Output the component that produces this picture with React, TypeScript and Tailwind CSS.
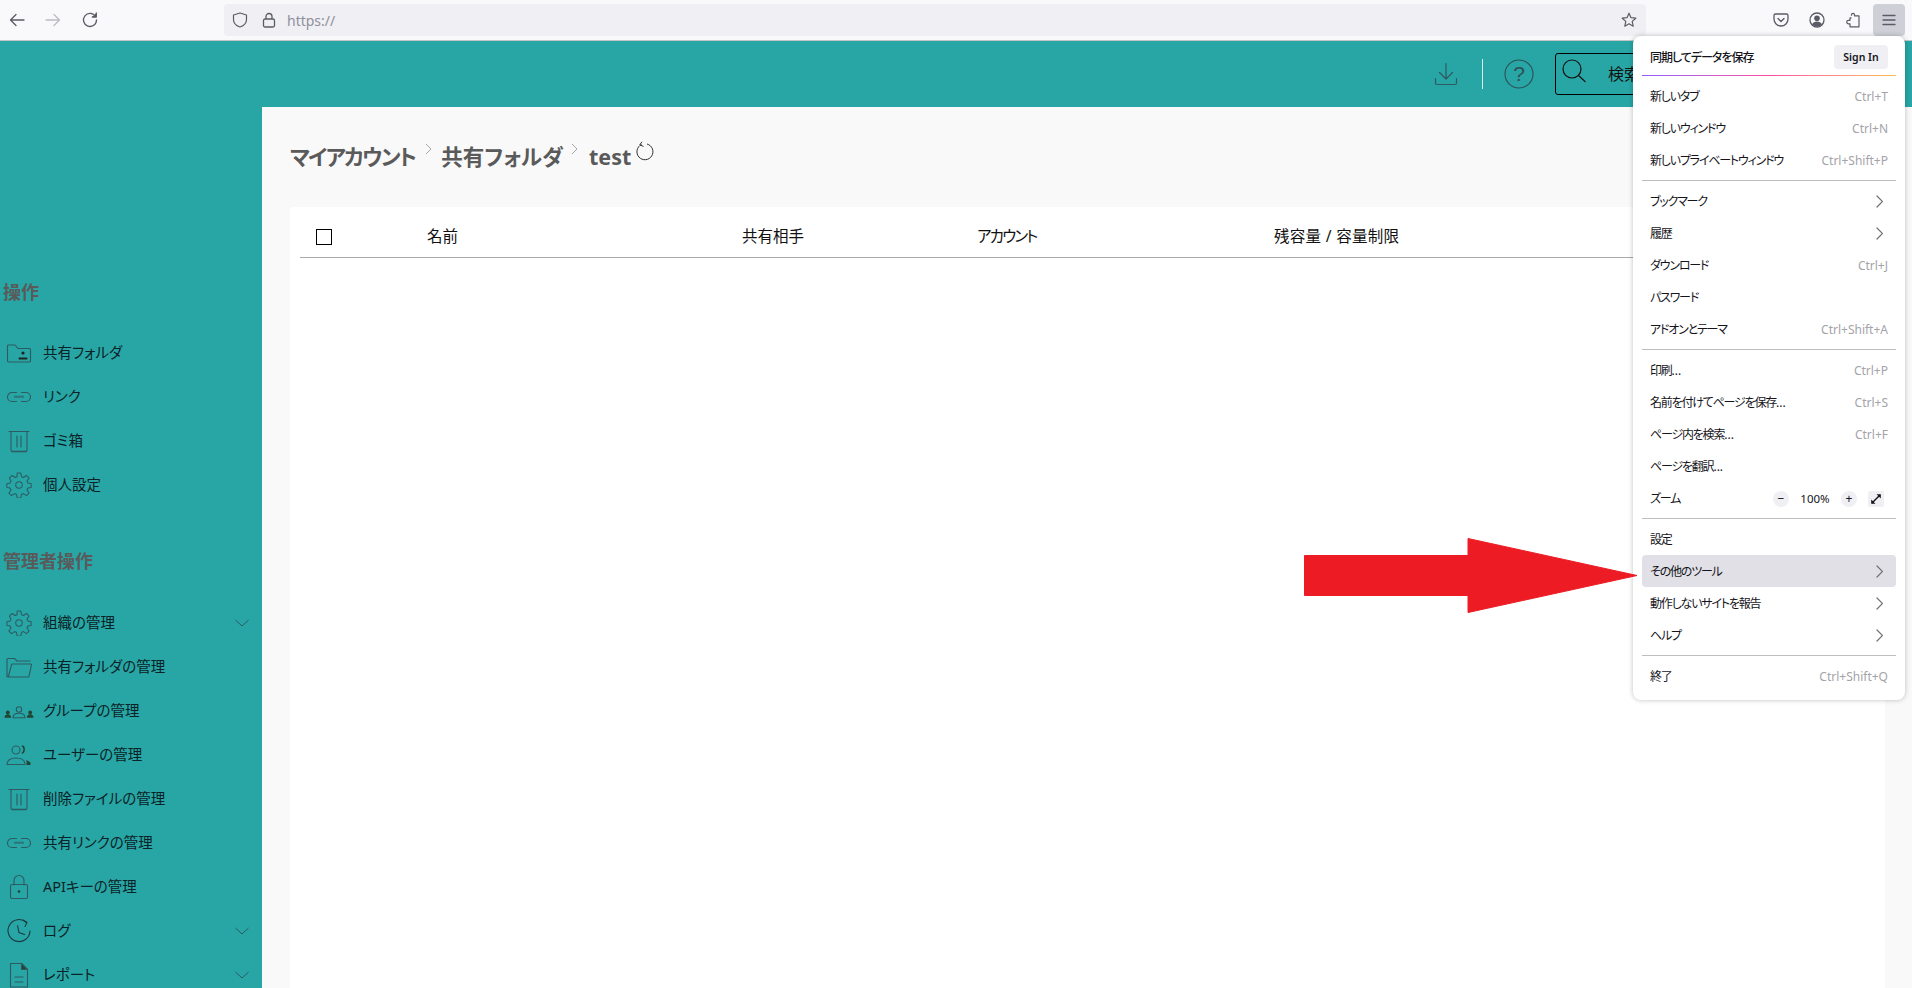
import React from "react";

const sw = { fill: "none", stroke: "currentColor", strokeWidth: 1.1, strokeLinecap: "round", strokeLinejoin: "round" } as const;

const IconFolderUser = () => (
  <svg width="26" height="24" viewBox="0 0 26 24" {...sw}>
    <path d="M1.5 4.5V20a1.5 1.5 0 0 0 1.5 1h20a1.5 1.5 0 0 0 1.5-1V8.5a1 1 0 0 0-1-1H12L9 4H2.5a1 1 0 0 0-1 .5z" />
    <circle cx="17" cy="12" r="1.6" fill="#222" stroke="none" />
    <path d="M13.5 17.5h7" stroke="#222" strokeWidth="2" />
  </svg>
);
const IconLink = () => (
  <svg width="26" height="24" viewBox="0 0 26 24" {...sw}>
    <path d="M10.5 7.5H6a4.5 4.5 0 0 0 0 9h4.5" />
    <path d="M15.5 7.5H20a4.5 4.5 0 0 1 0 9h-4.5" />
    <path d="M8.5 12h9" />
    <path d="M8.5 11h9" opacity="0.4" />
  </svg>
);
const IconTrash = () => (
  <svg width="26" height="24" viewBox="0 0 26 24" {...sw}>
    <path d="M3 2.5h20" />
    <path d="M5 2.5V21a1.5 1.5 0 0 0 1.5 1.5h13A1.5 1.5 0 0 0 21 21V2.5" />
    <path d="M11 7v11M15 7v11" />
    <path d="M6 22.5h14" strokeWidth="1.6" />
  </svg>
);
const IconGear = () => (
  <svg width="26" height="26" viewBox="0 0 24 24" strokeWidth="0.95" fill="none" stroke="currentColor" strokeLinejoin="round">
    <circle cx="12" cy="12" r="3" />
    <path d="M10.3 1h3.4l.6 3.3 1.8.8 2.8-1.9 2.4 2.4-1.9 2.8.8 1.8 3 .6v3.4l-3 .6-.8 1.8 1.9 2.8-2.4 2.4-2.8-1.9-1.8.8-.6 3.3h-3.4l-.6-3.3-1.8-.8-2.8 1.9-2.4-2.4 1.9-2.8-.8-1.8-3-.6v-3.4l3-.6.8-1.8L3.2 5.6l2.4-2.4 2.8 1.9 1.8-.8z" />
  </svg>
);
const IconFolderOpen = () => (
  <svg width="28" height="24" viewBox="0 0 28 24" {...sw}>
    <path d="M2 21V4.5a1 1 0 0 1 1-1h6.5l2.5 2.5h13" />
    <path d="M2 21a1 1 0 0 0 1 1h20a1 1 0 0 0 1-.8L26.5 10a.8.8 0 0 0-.8-1H7.5a1 1 0 0 0-1 .8L3.5 21" />
  </svg>
);
const IconGroup = () => (
  <svg width="30" height="24" viewBox="0 0 30 24" fill="none" stroke="currentColor" strokeWidth="1.100">
    <circle cx="15" cy="10.500" r="2.700" />
    <path d="M9 18.800c0-3 2.500-4.500 6-4.500s6 1.500 6 4.500z" />
    <circle cx="3.800" cy="13.500" r="1.900" fill="#243" stroke="none" />
    <circle cx="26.200" cy="13.500" r="1.900" fill="#243" stroke="none" />
    <path d="M.500 18.800c0-2.300 1.300-3.500 3.300-3.500s3.300 1.200 3.300 3.500zM22.900 18.800c0-2.300 1.300-3.500 3.300-3.500s3.300 1.200 3.300 3.500z" fill="#243" stroke="none" />
  </svg>
);
const IconUsers = () => (
  <svg width="26" height="24" viewBox="0 0 26 24" {...sw}>
    <circle cx="10" cy="7" r="4" />
    <path d="M1 21.500c0-4.500 4-6.500 9-6.500s9 2 9 6.500z" />
    <path d="M16.500 3c2.200 1 2.200 6 0 7" stroke="#243" strokeWidth="1.600" />
    <path d="M20.500 17l4 2.500v2.500h-4z" fill="#243" stroke="none" />
  </svg>
);
const IconLock = () => (
  <svg width="26" height="26" viewBox="0 0 26 26" {...sw}>
    <path d="M8 11V6.500a5 5 0 0 1 10 0V11" />
    <rect x="4.500" y="10.500" width="17" height="14" rx="1.500" />
    <circle cx="13" cy="17.500" r="1.300" fill="#243" stroke="none" />
  </svg>
);
const IconClock = () => (
  <svg width="26" height="26" viewBox="0 0 26 26" fill="none" stroke="#1c3a40" strokeWidth="1.100" strokeLinecap="round">
    <path d="M20.500 4.500A11 11 0 1 0 24 13" />
    <path d="M11.500 7.500l1.500 7 5.500 2" />
    <path d="M17 2l4 2.500-2 4" />
  </svg>
);
const IconFile = () => (
  <svg width="26" height="26" viewBox="0 0 26 26" {...sw}>
    <path d="M4.500 1.500h11l6 6V25h-17z" />
    <path d="M15.500 1.500l6 6h-6z" fill="#243" />
    <path d="M9 15h8M9 20h8" />
  </svg>
);
const ChevDown = () => (
  <svg className="block" width="14" height="8" viewBox="0 0 14 8" fill="none" stroke="currentColor" strokeWidth="1">
    <path d="M.5 1l6.500 6 6.500-6" />
  </svg>
);
const ChevRight = () => (
  <svg width="7" height="13" viewBox="0 0 7 13" fill="none" stroke="#6f6f76" strokeWidth="1.200" strokeLinecap="round">
    <path d="M1 1l5.500 5.500L1 12" />
  </svg>
);
const Crumb = () => (
  <svg width="8" height="12" viewBox="0 0 8 12" fill="none" stroke="#a8a8a8" strokeWidth="1">
    <path d="M1 1l5 5-5 5" />
  </svg>
);

type NavItem = { icon: React.ReactNode; label: string; chevron?: boolean };
const NavRow = ({ icon, label, chevron }: NavItem) => (
  <div className="flex h-11 items-center text-[14.500px] text-[#0d2226]">
    <span className="flex w-[38px] shrink-0 items-center justify-center text-[#2e5a62]">{icon}</span>
    <span className="ml-[5px] flex-1 whitespace-nowrap">{label}</span>
    {chevron && (
      <span className="mr-[13px] text-[#2e5a62]">
        <ChevDown />
      </span>
    )}
  </div>
);

const Sep = () => <div className="mx-[9px] my-[4px] h-px bg-[#bdbdc2]" />;

const MenuRow = ({
  label,
  dots,
  shortcut,
  chevron,
  active,
}: {
  label: string;
  dots?: boolean;
  shortcut?: string;
  chevron?: boolean;
  active?: boolean;
}) => (
  <div className={`mx-[9px] flex h-8 items-center justify-between rounded-[4px] px-[8px] pt-px ${active ? "bg-[#e0e0e6]" : ""}`}>
    <span className="whitespace-nowrap text-[12px] tracking-[-1.200px] text-[#15141a]">
      {label}
      {dots && <span className="tracking-[0px]">...</span>}
    </span>
    {shortcut && <span className="whitespace-nowrap text-[12px] text-[#a3a3a8]">{shortcut}</span>}
    {chevron && (
      <span className="mr-[5px] flex">
        <ChevRight />
      </span>
    )}
  </div>
);

const Toolbar = () => (
  <div className="flex h-[41px] shrink-0 items-center border-b border-[#c4c4c6] bg-[#f9f9fb] text-[#5b5b66]">
    <div className="flex w-[224px] items-center pl-[9px]">
      <svg width="16" height="16" viewBox="0 0 16 16" fill="none" stroke="#5b5b66" strokeWidth="1.300" strokeLinecap="round" strokeLinejoin="round">
        <path d="M15 8H1.500M7 2.500L1.500 8 7 13.500" />
      </svg>
      <svg className="ml-[20px]" width="16" height="16" viewBox="0 0 16 16" fill="none" stroke="#bdbdc2" strokeWidth="1.300" strokeLinecap="round" strokeLinejoin="round">
        <path d="M1 8h13.500M9 2.500L14.500 8 9 13.500" />
      </svg>
      <svg className="ml-[21px]" width="16" height="16" viewBox="0 0 16 16" fill="none" stroke="#5b5b66" strokeWidth="1.300" strokeLinecap="round" strokeLinejoin="round">
        <path d="M13.500 4.500A6.500 6.500 0 1 0 14.500 8" />
        <path d="M14.300 1v4h-4" fill="#5b5b66" />
      </svg>
    </div>
    <div className="flex h-8 w-[1422px] items-center rounded-[4px] bg-[#f0f0f4] pl-[8px] pr-[8px]">
      <svg width="16" height="16" viewBox="0 0 16 16" fill="none" stroke="#5b5b66" strokeWidth="1.200" strokeLinejoin="round">
        <path d="M8 1L1.500 3v4.500C1.500 11.500 5 14 8 15c3-1 6.500-3.500 6.500-7.500V3z" />
      </svg>
      <svg className="ml-[13px]" width="16" height="16" viewBox="0 0 16 16" fill="none" stroke="#5b5b66" strokeWidth="1.300" strokeLinejoin="round">
        <rect x="2.500" y="7" width="11" height="8" rx="1.500" />
        <path d="M5 7V4.500a3 3 0 0 1 6 0V7" />
      </svg>
      <span className="ml-[10px] text-[14px] text-[#8f8f9d]">https://</span>
      <svg className="ml-auto mr-[1px]" width="16" height="16" viewBox="0 0 16 16" fill="none" stroke="#5b5b66" strokeWidth="1.200" strokeLinejoin="round">
        <path d="M8 1.200l2 4.500 4.800.500-3.600 3.200 1 4.800L8 11.800l-4.200 2.400 1-4.800L1.200 6.200 6 5.700z" />
      </svg>
    </div>
    <div className="ml-auto flex items-center">
      <svg width="16" height="16" viewBox="0 0 16 16" fill="none" stroke="#5b5b66" strokeWidth="1.300" strokeLinecap="round" strokeLinejoin="round">
        <path d="M2.500 2h11a1.500 1.500 0 0 1 1.500 1.500V7A7 7 0 0 1 1 7V3.500A1.500 1.500 0 0 1 2.500 2z" />
        <path d="M5 6.500l3 3 3-3" />
      </svg>
      <svg className="ml-[20px]" width="16" height="16" viewBox="0 0 16 16" fill="none">
        <circle cx="8" cy="8" r="7" stroke="#5b5b66" strokeWidth="1.300" />
        <circle cx="8" cy="6.300" r="2.800" fill="#5b5b66" />
        <path d="M3 12.500c1-2.300 3-3 5-3s4 .7 5 3c-1.300 1.300-3 2-5 2s-3.700-.7-5-2z" fill="#5b5b66" />
      </svg>
      <svg className="ml-[20px]" width="16" height="16" viewBox="0 0 16 16" fill="none" stroke="#5b5b66" strokeWidth="1.200" strokeLinejoin="round">
        <path d="M6.500 3V2a1.500 1.500 0 0 1 3 0v1h4.500v11H5v-3H3.500a1.500 1.500 0 0 1 0-3.500H5V5h1.500" transform="translate(0 .8)" />
      </svg>
      <div className="ml-[12px] mr-[7px] flex h-8 w-8 items-center justify-center rounded-[4px] bg-[#cfcfd8]">
        <svg width="14" height="12" viewBox="0 0 14 12" stroke="#5b5b66" strokeWidth="1.300" strokeLinecap="round">
          <path d="M1 1.500h12M1 6h12M1 10.500h12" />
        </svg>
      </div>
    </div>
  </div>
);

const Header = () => (
  <div className="flex h-[66px] shrink-0 items-center justify-end bg-[#27a6a5] pr-[60px]">
    <svg width="24" height="24" viewBox="0 0 24 24" fill="none" stroke="#2e5a62" strokeWidth="1.200" strokeLinecap="round" strokeLinejoin="round">
      <path d="M12 1.500v15M5.500 10.500l6.500 6.500 6.500-6.500" />
      <path d="M1.500 16.500v4.500a1.500 1.500 0 0 0 1.500 1.500h18a1.500 1.500 0 0 0 1.500-1.500v-4.500" />
    </svg>
    <div className="ml-[24px] h-[30px] w-[1px] bg-[#d8ecec]" />
    <svg className="ml-[21px]" width="30" height="30" viewBox="0 0 30 30" fill="none" stroke="#2e4f55" strokeWidth="1.100">
      <circle cx="15" cy="15" r="14" />
      <text x="15" y="22" textAnchor="middle" fontSize="21" fill="#2e4f55" stroke="none" fontFamily="Liberation Sans">?</text>
    </svg>
    <div className="ml-[21px] flex h-[42px] w-[297px] items-start rounded-[3px] border-[1.500px] border-black pl-[6px] pt-[5px]">
      <svg width="24" height="24" viewBox="0 0 24 24" fill="none" stroke="#111" strokeWidth="1.200" strokeLinecap="round">
        <circle cx="10" cy="10" r="9" />
        <path d="M16.500 16.500l6.500 6" />
      </svg>
      <span className="ml-[22px] mt-[3px] text-[16px] text-[#111]">検索</span>
    </div>
  </div>
);

const primary: NavItem[] = [
  { icon: <IconFolderUser />, label: "共有フォルダ" },
  { icon: <IconLink />, label: "リンク" },
  { icon: <IconTrash />, label: "ゴミ箱" },
  { icon: <IconGear />, label: "個人設定" },
];
const admin: NavItem[] = [
  { icon: <IconGear />, label: "組織の管理", chevron: true },
  { icon: <IconFolderOpen />, label: "共有フォルダの管理" },
  { icon: <IconGroup />, label: "グループの管理" },
  { icon: <IconUsers />, label: "ユーザーの管理" },
  { icon: <IconTrash />, label: "削除ファイルの管理" },
  { icon: <IconLink />, label: "共有リンクの管理" },
  { icon: <IconLock />, label: "APIキーの管理" },
  { icon: <IconClock />, label: "ログ", chevron: true },
  { icon: <IconFile />, label: "レポート", chevron: true },
];

const Sidebar = () => (
  <aside className="h-full w-[262px] shrink-0 overflow-hidden bg-[#27a6a5]">
    <h2 className="mt-[171px] h-7 pl-[3px] text-[18px] font-bold leading-7 text-[#5a5a5a]">操作</h2>
    <div className="mt-[25px]">
      {primary.map((i) => (
        <NavRow key={i.label} {...i} />
      ))}
    </div>
    <h2 className="mt-[40px] h-7 pl-[3px] text-[18px] font-bold leading-7 text-[#5a5a5a]">管理者操作</h2>
    <div className="mt-[26px]">
      {admin.map((i) => (
        <NavRow key={i.label} {...i} />
      ))}
    </div>
  </aside>
);

const Main = () => (
  <main className="h-full flex-1 overflow-hidden bg-[#f9f9f9] pl-[28px] pr-[27px]">
    <div className="flex h-[100px] items-start pt-[32px] text-[21.500px] font-bold text-[#5a5a5a]">
      <span className="leading-[36px] tracking-[-1.700px]">マイアカウント</span>
      <span className="ml-[10px] mt-[4px] flex"><Crumb /></span>
      <span className="ml-[8px] leading-[36px]">共有フォルダ</span>
      <span className="ml-[8px] mt-[4px] flex"><Crumb /></span>
      <span className="ml-[10px] leading-[36px]">test</span>
      <svg className="ml-[4px] mt-[2px]" width="20" height="20" viewBox="0 0 20 20" fill="none" stroke="#333" strokeWidth="1">
        <path d="M6.500 3.500A8 8 0 1 0 12 3" />
        <path d="M7 .8L4.800 3.700 8.500 5.500" />
      </svg>
    </div>
    <div className="h-full rounded-t-[3px] bg-white px-[10px]">
      <div className="flex h-[51px] items-center border-b border-[#aaa] pt-[10px] text-[15.500px] text-[#111]">
        <span className="ml-[16px] block h-4 w-4 border-[1.500px] border-black" />
        <span className="ml-[95px] w-[315px]">名前</span>
        <span className="w-[235px]">共有相手</span>
        <span className="w-[297px] tracking-[-1.800px]">アカウント</span>
        <span className="tracking-[0.300px]">残容量 / 容量制限</span>
      </div>
    </div>
  </main>
);

const AppMenu = () => (
  <div className="absolute right-[7px] top-[36px] w-[272px] rounded-[8px] bg-white pb-2 pt-[9px] shadow-[0_0_5px_rgba(0,0,0,0.25)]">
    <div className="mx-[9px] flex h-6 items-center justify-between pl-[8px] pr-[8px]">
      <span className="pt-px text-[12px] font-medium tracking-[-1px] text-[#15141a]">同期してデータを保存</span>
      <span className="flex h-6 w-[54px] items-center justify-center rounded-[4px] bg-[#f0f0f4] pt-px text-[10.500px] font-semibold text-[#15141a]">Sign In</span>
    </div>
    <div className="mx-[9px] mb-[4px] mt-[6px] h-px bg-gradient-to-r from-[#9059ff] via-[#ff4aa2] to-[#ffbd4f]" />
    <MenuRow label="新しいタブ" shortcut="Ctrl+T" />
    <MenuRow label="新しいウィンドウ" shortcut="Ctrl+N" />
    <MenuRow label="新しいプライベートウィンドウ" shortcut="Ctrl+Shift+P" />
    <Sep />
    <MenuRow label="ブックマーク" chevron />
    <MenuRow label="履歴" chevron />
    <MenuRow label="ダウンロード" shortcut="Ctrl+J" />
    <MenuRow label="パスワード" />
    <MenuRow label="アドオンとテーマ" shortcut="Ctrl+Shift+A" />
    <Sep />
    <MenuRow label="印刷" dots shortcut="Ctrl+P" />
    <MenuRow label="名前を付けてページを保存" dots shortcut="Ctrl+S" />
    <MenuRow label="ページ内を検索" dots shortcut="Ctrl+F" />
    <MenuRow label="ページを翻訳" dots />
    <div className="mx-[9px] flex h-8 items-center px-[8px] pt-px">
      <span className="text-[12px] tracking-[-1.200px] text-[#15141a]">ズーム</span>
      <span className="ml-auto flex h-[16px] w-[16px] items-center justify-center rounded-full bg-[#f0f0f4] text-[12px] leading-none text-[#15141a]">−</span>
      <span className="ml-[10px] w-[32px] text-center text-[11.500px] text-[#15141a]">100%</span>
      <span className="ml-[10px] flex h-[16px] w-[16px] items-center justify-center rounded-full bg-[#f0f0f4] text-[12px] leading-none text-[#15141a]">+</span>
      <span className="ml-[11px] mr-[4px] flex h-[16px] w-[16px] items-center justify-center rounded-[2px] bg-[#f0f0f4]">
        <svg width="12" height="12" viewBox="0 0 12 12" fill="none" stroke="#15141a" strokeWidth="1.400">
          <path d="M2 10l8-8" />
          <path d="M6.500 1.200h4.300v4.300M1.200 6.500v4.300h4.300" fill="#15141a" stroke="none" />
        </svg>
      </span>
    </div>
    <Sep />
    <MenuRow label="設定" />
    <MenuRow label="その他のツール" chevron active />
    <MenuRow label="動作しないサイトを報告" chevron />
    <MenuRow label="ヘルプ" chevron />
    <Sep />
    <MenuRow label="終了" shortcut="Ctrl+Shift+Q" />
  </div>
);

const RedArrow = () => (
  <svg className="absolute left-[1304px] top-[538px]" width="336" height="76" viewBox="0 0 336 76">
    <path d="M0.500 17.500H164V0.500L333 37.500 164 74.500V57.500H0.500z" fill="#ed1c24" stroke="#ed1c24" strokeLinejoin="round" />
  </svg>
);

export default function App() {
  return (
    <div className="relative flex h-[988px] w-[1912px] flex-col overflow-hidden bg-[#27a6a5] font-['Noto_Sans','Noto_Sans_CJK_JP',sans-serif] [font-feature-settings:'palt']">
      <Toolbar />
      <Header />
      <div className="flex min-h-0 flex-1">
        <Sidebar />
        <Main />
      </div>
      <AppMenu />
      <RedArrow />
    </div>
  );
}
